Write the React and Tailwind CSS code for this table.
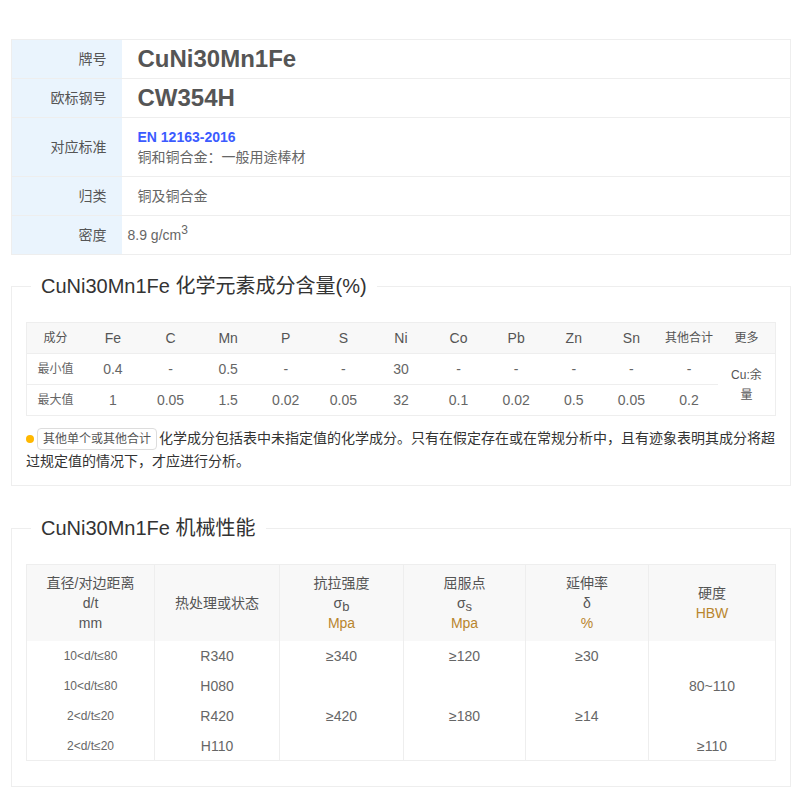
const chemCols = ['Fe', 'C', 'Mn', 'P', 'S', 'Ni', 'Co', 'Pb', 'Zn', 'Sn'];
const chemMin = ['0.4', '-', '0.5', '-', '-', '30', '-', '-', '-', '-', '-'];
const chemMax = ['1', '0.05', '1.5', '0.02', '0.05', '32', '0.1', '0.02', '0.5', '0.05', '0.2'];

const mechRows = [
    ['10<d/t≤80', 'R340', '≥340', '≥120', '≥30', ''],
    ['10<d/t≤80', 'H080', '', '', '', '80~110'],
    ['2<d/t≤20', 'R420', '≥420', '≥180', '≥14', ''],
    ['2<d/t≤20', 'H110', '', '', '', '≥110'],
];

const InfoRow = ({ label, children, tall, pad = 'pl-4' }) => (
    <tr className="border-b border-[#eee]">
        <td className={`w-[110px] bg-[#eaf4fd] pr-[15px] text-right text-sm text-[#555] ${tall ? 'h-[59px]' : 'h-[39px]'}`}>
            {label}
        </td>
        <td className={`${pad} text-sm text-[#666]`}>{children}</td>
    </tr>
);

const Section = ({ title, children, className = '' }) => (
    <fieldset className={`w-[780px] border border-[#eee] px-[14px] ${className}`}>
        <legend className="ml-[5px] px-[10px] text-[20px] leading-[28px] text-[#333]">{title}</legend>
        {children}
    </fieldset>
);

export default function App() {
    return (
        <div className="bg-white pl-[11px] pt-[39px] pb-[14px] font-['Liberation_Sans','Noto_Sans_CJK_SC',sans-serif]">
            <table className="w-[780px] border-collapse border border-[#eee]">
                <tbody>
                    <InfoRow label="牌号">
                        <span className="text-[24px] font-bold text-[#555]">CuNi30Mn1Fe</span>
                    </InfoRow>
                    <InfoRow label="欧标钢号">
                        <span className="text-[24px] font-bold text-[#555]">CW354H</span>
                    </InfoRow>
                    <InfoRow label="对应标准" tall>
                        <div className="leading-5">
                            <div className="font-bold text-[#3b5bff]">EN 12163-2016</div>
                            <div>铜和铜合金：一般用途棒材</div>
                        </div>
                    </InfoRow>
                    <InfoRow label="归类">铜及铜合金</InfoRow>
                    <InfoRow label="密度" pad="pl-[6px]">
                        8.9 g/cm<sup className="text-xs">3</sup>
                    </InfoRow>
                </tbody>
            </table>

            <Section title="CuNi30Mn1Fe 化学元素成分含量(%)" className="mt-[17px] pb-[12px]">
                <table className="mt-[22px] w-full table-fixed border-collapse border border-[#eee] text-center">
                    <thead>
                        <tr className="h-[31px] bg-[#f8f8f8] text-[#555]">
                            <th className="text-xs font-normal">成分</th>
                            {chemCols.map((c) => (
                                <th key={c} className="text-sm font-normal">{c}</th>
                            ))}
                            <th className="text-xs font-normal">其他合计</th>
                            <th className="text-xs font-normal">更多</th>
                        </tr>
                    </thead>
                    <tbody className="text-sm text-[#666]">
                        <tr className="h-[31px] border-t border-[#eee]">
                            <td className="text-xs">最小值</td>
                            {chemMin.map((v, i) => (
                                <td key={i}>{v}</td>
                            ))}
                            <td rowSpan={2} className="px-2 text-xs leading-5 text-[#555]">Cu:余量</td>
                        </tr>
                        <tr className="h-[31px]">
                            <td className="border-t border-[#eee] text-xs">最大值</td>
                            {chemMax.map((v, i) => (
                                <td key={i} className="border-t border-[#eee]">{v}</td>
                            ))}
                        </tr>
                    </tbody>
                </table>
                <p className="mt-[11px] text-sm leading-[23px] text-[#333]">
                    <span className="mr-[3px] inline-block h-2 w-2 rounded-full bg-[#ffb800] align-middle" />
                    <span className="mr-[2px] inline-block h-[22px] rounded-sm border border-[#ddd] px-[5px] align-middle text-xs leading-[20px] text-[#555]">
                        其他单个或其他合计
                    </span>
                    <span>化学成分包括表中未指定值的化学成分。只有在假定存在或在常规分析中，且有迹象表明其成分将超</span>
                    <br />
                    <span>过规定值的情况下，才应进行分析。</span>
                </p>
            </Section>

            <Section title="CuNi30Mn1Fe 机械性能" className="mt-[28px] pb-[25px]">
                <table className="mt-[22px] w-full table-fixed border-collapse border border-[#eee] text-center">
                    <thead>
                        <tr className="h-[76px] bg-[#f8f8f8] text-sm leading-5 text-[#555]">
                            <th className="w-[128px] border-r border-[#eee] font-normal">
                                直径/对边距离<br />d/t<br />mm
                            </th>
                            <th className="w-[125px] border-r border-[#eee] font-normal">热处理或状态</th>
                            <th className="w-[124px] border-r border-[#eee] font-normal">
                                抗拉强度<br />σ<sub className="text-[13px]">b</sub><br /><span className="text-[#b8862e]">Mpa</span>
                            </th>
                            <th className="w-[122px] border-r border-[#eee] font-normal">
                                屈服点<br />σ<sub className="text-[13px]">s</sub><br /><span className="text-[#b8862e]">Mpa</span>
                            </th>
                            <th className="w-[123px] border-r border-[#eee] font-normal">
                                延伸率<br />δ<br /><span className="text-[#b8862e]">%</span>
                            </th>
                            <th className="font-normal">
                                硬度<br /><span className="text-[#b8862e]">HBW</span>
                            </th>
                        </tr>
                    </thead>
                    <tbody className="text-sm text-[#666]">
                        {mechRows.map((row, r) => (
                            <tr key={r} className="h-[30px]">
                                {row.map((cell, c) => (
                                    <td
                                        key={c}
                                        className={`${c < 5 ? 'border-r border-[#eee]' : ''} ${c === 0 ? 'text-xs' : ''}`}
                                    >
                                        {cell}
                                    </td>
                                ))}
                            </tr>
                        ))}
                    </tbody>
                </table>
            </Section>
        </div>
    );
}
